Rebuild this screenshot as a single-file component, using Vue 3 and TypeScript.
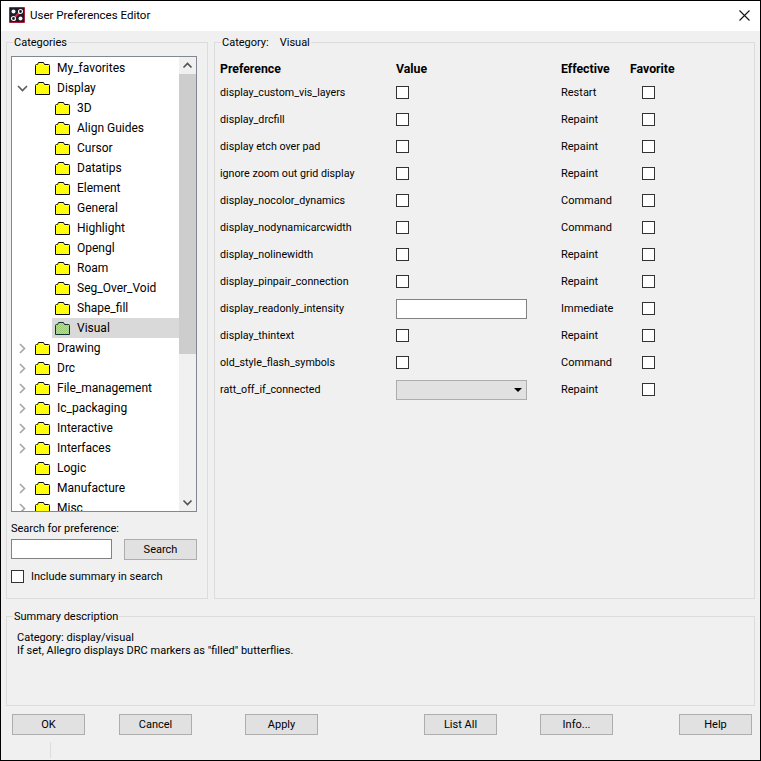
<template>
  <div class="window">
    <svg class="defs" width="0" height="0">
      <defs>
        <pattern id="dither-yellow" width="2" height="2" patternUnits="userSpaceOnUse">
          <rect width="2" height="2" fill="#ffff00" />
          <rect width="1" height="1" fill="#ffff90" />
          <rect x="1" y="1" width="1" height="1" fill="#ffff90" />
        </pattern>
        <pattern id="dither-green" width="2" height="2" patternUnits="userSpaceOnUse">
          <rect width="2" height="2" fill="#9cc878" />
          <rect width="1" height="1" fill="#bcd8a4" />
          <rect x="1" y="1" width="1" height="1" fill="#bcd8a4" />
        </pattern>
      </defs>
    </svg>
    <header class="titlebar">
      <svg class="app-icon" width="16" height="16" viewBox="0 0 16 16">
        <rect width="16" height="16" rx="1" fill="#b01c3c" />
        <rect x="1" y="1" width="14" height="14" fill="#1c1c24" />
        <path d="M3 13 L13 3" stroke="#c8284c" stroke-width="2" />
        <circle cx="4.5" cy="4.5" r="2" fill="#f4f4f4" />
        <circle cx="11.5" cy="4.5" r="2" fill="#1c1c24" stroke="#f4f4f4" stroke-width="1.2" />
        <circle cx="4.5" cy="11.5" r="2" fill="#1c1c24" stroke="#f4f4f4" stroke-width="1.2" />
        <circle cx="11.5" cy="11.5" r="2" fill="#f4f4f4" />
      </svg>
      <span class="title">User Preferences Editor</span>
      <svg class="close" width="11" height="11" viewBox="0 0 11 11">
        <path d="M0.5 0.5 L10.5 10.5 M10.5 0.5 L0.5 10.5" stroke="#111" stroke-width="1.1" fill="none" />
      </svg>
    </header>

    <div class="content">
      <div class="top">
        <fieldset class="group categories">
          <legend>Categories</legend>
          <div class="tree">
            <ul class="rows">
              <li
                v-for="row in treeRows"
                :key="row.label"
                class="row"
                :class="{ child: row.child, selected: row.label === selected }"
              >
                <span class="twisty">
                  <svg v-if="row.arrow === 'open'" width="11" height="7" viewBox="0 0 11 7">
                    <path d="M1 1 L5.5 5.5 L10 1" fill="none" stroke="#5a5a5a" stroke-width="1.6" />
                  </svg>
                  <svg v-else-if="row.arrow === 'closed'" width="7" height="11" viewBox="0 0 7 11">
                    <path d="M1 1 L5.5 5.5 L1 10" fill="none" stroke="#a6a6a6" stroke-width="1.6" />
                  </svg>
                </span>
                <svg class="folder" width="15" height="13" viewBox="0 0 15 13">
                  <path
                    d="M0.5 12.5 V3.5 Q0.5 2.5 1.5 2.5 H2.5 L3.5 0.5 H8.5 L9.5 2.5 H13.5 Q14.5 2.5 14.5 3.5 V12.5 Z"
                    :fill="row.label === selected ? 'url(#dither-green)' : 'url(#dither-yellow)'"
                    :stroke="row.label === selected ? '#0c3030' : '#0a0a0a'"
                  />
                </svg>
                <span class="row-label">{{ row.label }}</span>
              </li>
            </ul>
            <div class="scrollbar">
              <svg width="17" height="17" viewBox="0 0 17 17">
                <path d="M4.5 10.5 L8.5 6.5 L12.5 10.5" fill="none" stroke="#505050" stroke-width="1.6" />
              </svg>
              <div class="track"><div class="thumb"></div></div>
              <svg width="17" height="17" viewBox="0 0 17 17">
                <path d="M4.5 6.5 L8.5 10.5 L12.5 6.5" fill="none" stroke="#505050" stroke-width="1.6" />
              </svg>
            </div>
          </div>
          <label class="search-label">Search for preference:</label>
          <div class="search">
            <div class="input search-input"></div>
            <div class="btn search-btn">Search</div>
          </div>
          <div class="include">
            <span class="check"></span>
            <span>Include summary in search</span>
          </div>
        </fieldset>

        <fieldset class="group prefs">
          <legend class="cat-legend"><span>Category:</span><span>Visual</span></legend>
          <div class="grid">
            <b>Preference</b>
            <b>Value</b>
            <b>Effective</b>
            <b>Favorite</b>
            <template v-for="pref in prefs" :key="pref.name">
              <span class="pref-name">{{ pref.name }}</span>
              <div class="value">
                <span v-if="pref.kind === 'check'" class="check"></span>
                <div v-else-if="pref.kind === 'input'" class="input value-input"></div>
                <div v-else class="combo"><i class="caret"></i></div>
              </div>
              <span>{{ pref.effective }}</span>
              <div class="fav"><span class="check"></span></div>
            </template>
          </div>
        </fieldset>
      </div>

      <fieldset class="group summary">
        <legend>Summary description</legend>
        <p>Category: display/visual</p>
        <p>If set, Allegro displays DRC markers as "filled" butterflies.</p>
      </fieldset>

      <div class="buttons">
        <div v-for="b in buttons" :key="b" class="btn">{{ b }}</div>
      </div>

      <div class="statusbar"><div class="status-cell"></div></div>
    </div>
  </div>
</template>

<script setup lang="ts">
type Arrow = 'open' | 'closed' | 'none'

interface TreeRow {
  label: string
  arrow: Arrow
  child: boolean
}

interface Pref {
  name: string
  kind: 'check' | 'input' | 'combo'
  effective: string
}

const selected = 'Visual'

const childNames = [
  '3D', 'Align Guides', 'Cursor', 'Datatips', 'Element', 'General', 'Highlight',
  'Opengl', 'Roam', 'Seg_Over_Void', 'Shape_fill', 'Visual',
]

const treeRows: TreeRow[] = [
  { label: 'My_favorites', arrow: 'none', child: false },
  { label: 'Display', arrow: 'open', child: false },
  ...childNames.map((label) => ({ label, arrow: 'none' as Arrow, child: true })),
  { label: 'Drawing', arrow: 'closed', child: false },
  { label: 'Drc', arrow: 'closed', child: false },
  { label: 'File_management', arrow: 'closed', child: false },
  { label: 'Ic_packaging', arrow: 'closed', child: false },
  { label: 'Interactive', arrow: 'closed', child: false },
  { label: 'Interfaces', arrow: 'closed', child: false },
  { label: 'Logic', arrow: 'none', child: false },
  { label: 'Manufacture', arrow: 'closed', child: false },
  { label: 'Misc', arrow: 'closed', child: false },
]

const prefs: Pref[] = [
  { name: 'display_custom_vis_layers', kind: 'check', effective: 'Restart' },
  { name: 'display_drcfill', kind: 'check', effective: 'Repaint' },
  { name: 'display etch over pad', kind: 'check', effective: 'Repaint' },
  { name: 'ignore zoom out grid display', kind: 'check', effective: 'Repaint' },
  { name: 'display_nocolor_dynamics', kind: 'check', effective: 'Command' },
  { name: 'display_nodynamicarcwidth', kind: 'check', effective: 'Command' },
  { name: 'display_nolinewidth', kind: 'check', effective: 'Repaint' },
  { name: 'display_pinpair_connection', kind: 'check', effective: 'Repaint' },
  { name: 'display_readonly_intensity', kind: 'input', effective: 'Immediate' },
  { name: 'display_thintext', kind: 'check', effective: 'Repaint' },
  { name: 'old_style_flash_symbols', kind: 'check', effective: 'Command' },
  { name: 'ratt_off_if_connected', kind: 'combo', effective: 'Repaint' },
]

const buttons = ['OK', 'Cancel', 'Apply', 'List All', 'Info...', 'Help']
</script>

<style>
html,
body {
  margin: 0;
  background: #f0f0f0;
}
</style>

<style scoped>
.window {
  box-sizing: border-box;
  width: 761px;
  height: 761px;
  border: 1px solid #000;
  background: #f0f0f0;
  color: #000;
  font-family: Roboto, "Open Sans", sans-serif;
  font-size: 11px;
  line-height: 15px;
  display: flex;
  flex-direction: column;
  overflow: hidden;
}
.defs {
  position: absolute;
}
.titlebar {
  box-sizing: border-box;
  height: 30px;
  flex: none;
  background: #fff;
  display: flex;
  align-items: center;
  padding: 0 10px 2px 8px;
}
.app-icon {
  flex: none;
}
.title {
  margin-left: 5px;
  font-size: 11.5px;
}
.close {
  margin-left: auto;
}
.content {
  flex: 1;
  display: flex;
  flex-direction: column;
  padding: 4px 5px 0;
  min-height: 0;
}
.top {
  display: flex;
  gap: 6px;
  height: 564px;
  flex: none;
}
.group {
  box-sizing: border-box;
  margin: 0;
  min-width: 0;
  border: 1px solid #dcdcdc;
  padding: 0;
}
.group legend {
  padding: 0 1px;
  line-height: 15px;
}
.categories legend {
  margin-left: 2px;
}
.summary legend {
  margin-left: -4px;
}
.group .cat-legend {
  margin-left: 1px;
}
.categories {
  width: 202px;
  flex: none;
  padding: 6px 10px 0 4px;
}
.tree {
  box-sizing: border-box;
  height: 456px;
  border: 1px solid #828790;
  background: #fff;
  display: flex;
  overflow: hidden;
}
.rows {
  list-style: none;
  margin: 1px 0 0;
  padding: 0;
  flex: 1;
  min-width: 0;
  height: 453px;
  overflow: hidden;
  font-size: 12px;
}
.row {
  height: 20px;
  display: flex;
  align-items: center;
  white-space: nowrap;
}
.twisty {
  width: 16px;
  margin-left: 2px;
  flex: none;
  display: flex;
  justify-content: center;
}
.folder {
  flex: none;
  margin-left: 5px;
}
.row-label {
  margin-left: 7px;
  padding-right: 2px;
}
.row.child .twisty {
  margin-left: 22px;
}
.row.selected {
  background: linear-gradient(to right, #fff 40px, #d9d9d9 40px);
}
.scrollbar {
  width: 17px;
  flex: none;
  background: #f0f0f0;
  display: flex;
  flex-direction: column;
}
.scrollbar svg {
  flex: none;
}
.track {
  flex: 1;
}
.thumb {
  height: 280px;
  background: #cdcdcd;
}
.search-label {
  display: block;
  margin-top: 9px;
}
.search {
  display: flex;
  justify-content: space-between;
  margin-top: 3px;
}
.input {
  box-sizing: border-box;
  background: #fff;
  border: 1px solid #828282;
}
.search-input {
  width: 101px;
  height: 20px;
}
.search-btn {
  width: 73px;
  height: 21px;
}
.include {
  display: flex;
  align-items: center;
  gap: 7px;
  margin-top: 9px;
}
.check {
  display: block;
  box-sizing: border-box;
  width: 13px;
  height: 13px;
  background: #fff;
  border: 1px solid #333;
  flex: none;
}
.prefs {
  flex: 1;
  padding: 0 5px;
}
.cat-legend {
  display: flex;
  gap: 11px;
}
.grid {
  display: grid;
  grid-template-columns: 176px 165px 69px 1fr;
  grid-template-rows: 20px;
  grid-auto-rows: 27px;
  align-items: center;
  margin-top: 9px;
}
.grid b {
  font-size: 12.3px;
}
.pref-name {
  font-size: 10.7px;
}
.value,
.fav {
  display: flex;
  align-items: center;
}
.fav {
  padding-left: 12px;
}
.value-input {
  width: 131px;
  height: 20px;
}
.combo {
  box-sizing: border-box;
  width: 131px;
  height: 20px;
  background: #e1e1e1;
  border: 1px solid #adadad;
  display: flex;
  align-items: center;
  justify-content: flex-end;
  padding-right: 4px;
}
.caret {
  display: block;
  width: 0;
  height: 0;
  border-left: 4px solid transparent;
  border-right: 4px solid transparent;
  border-top: 4px solid #000;
}
.summary {
  flex: none;
  height: 97px;
  margin-top: 10px;
  padding: 7px 10px 0;
}
.summary p {
  margin: 0;
  line-height: 13px;
}
.buttons {
  display: flex;
  margin-top: 8px;
  padding: 0 6px;
}
.buttons .btn:nth-child(2) {
  margin-left: 34px;
}
.buttons .btn:nth-child(3) {
  margin-left: 53px;
}
.buttons .btn:nth-child(4) {
  margin-left: 106px;
}
.buttons .btn:nth-child(5) {
  margin-left: 43px;
}
.buttons .btn:nth-child(6) {
  margin-left: 66px;
}
.btn {
  box-sizing: border-box;
  flex: none;
  width: 73px;
  height: 21px;
  background: #e1e1e1;
  border: 1px solid #adadad;
  display: flex;
  align-items: center;
  justify-content: center;
}
.statusbar {
  margin-top: 7px;
  height: 16px;
  padding-left: 44px;
}
.status-cell {
  width: 1px;
  height: 16px;
  background: #dcdcdc;
}
</style>
